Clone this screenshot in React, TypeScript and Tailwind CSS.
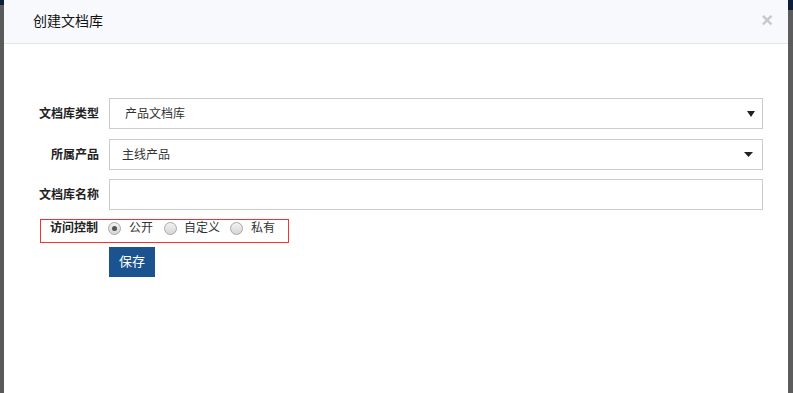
import React from "react";

function Radio({ checked }: { checked?: boolean }) {
  return (
    <span className="inline-flex h-[13px] w-[13px] items-center justify-center rounded-full border border-[#a8a8a8] bg-gradient-to-b from-[#f2f2f2] to-[#d6d6d6]">
      {checked && <span className="h-[5px] w-[5px] rounded-full bg-[#555]" />}
    </span>
  );
}

export default function App() {
  const font = { fontFamily: '"Liberation Sans", "Noto Sans CJK SC", sans-serif' };
  return (
    <div className="flex h-[393px] w-[793px] bg-[#5e5e5e]" style={font}>
      <div className="w-[4px] shrink-0 bg-[#5a5a5a]">
        <div className="h-[5px] bg-[#0b1e3a]" />
      </div>
      <div className="flex w-[784px] shrink-0 flex-col bg-white">
        <div className="flex h-[44px] shrink-0 items-center justify-between border-b border-[#e5e5e5] bg-[#f8f9fd] pl-[29px] pr-[15px]">
          <span className="text-[14px] text-[#111]">创建文档库</span>
          <span className="-mt-[4px] text-[20px] font-bold leading-none text-[#c8c8c8]">×</span>
        </div>
        <div className="flex flex-col pt-[54px]">
          <div className="flex items-center">
            <div className="w-[96px] pr-[1px] text-right text-[12px] font-bold text-[#222]">文档库类型</div>
            <div className="ml-[9px] flex h-[31px] w-[654px] items-center justify-between border border-[#ccc] pl-[15px] pr-[7px] text-[12px] text-[#333]">
              <span>产品文档库</span>
              <svg width="8" height="6" viewBox="0 0 8 6" className="block">
                <path d="M0 0 L8 0 L4 6 Z" fill="#222" />
              </svg>
            </div>
          </div>
          <div className="mt-[10px] flex items-center">
            <div className="w-[96px] pr-[1px] text-right text-[12px] font-bold text-[#222]">所属产品</div>
            <div className="ml-[9px] flex h-[31px] w-[654px] items-center justify-between border border-[#ccc] pl-[12px] pr-[9px] text-[12px] text-[#333]">
              <span>主线产品</span>
              <svg width="9" height="5" viewBox="0 0 9 5" className="block">
                <path d="M0 0 L9 0 L4.5 5 Z" fill="#222" />
              </svg>
            </div>
          </div>
          <div className="mt-[9px] flex items-center">
            <div className="w-[96px] pr-[1px] text-right text-[12px] font-bold text-[#222]">文档库名称</div>
            <div className="ml-[9px] h-[31px] w-[654px] border border-[#ccc]" />
          </div>
          <div className="mt-[9px] flex">
            <div className="ml-[36px] flex h-[24px] w-[249px] items-start border border-[#e33] text-[12px] text-[#333]">
              <div className="-mt-[1px] flex items-center">
                <span className="ml-[9px] font-bold text-[#222]">访问控制</span>
                <span className="ml-[10px] flex items-center">
                  <Radio checked />
                  <span className="ml-[8px]">公开</span>
                </span>
                <span className="ml-[11px] flex items-center">
                  <Radio />
                  <span className="ml-[7px]">自定义</span>
                </span>
                <span className="ml-[10px] flex items-center">
                  <Radio />
                  <span className="ml-[8px]">私有</span>
                </span>
              </div>
            </div>
          </div>
          <div className="ml-[105px] mt-[4px]">
            <div className="flex h-[30px] w-[46px] items-center justify-center bg-[#1b5390] text-[13px] text-white">保存</div>
          </div>
        </div>
      </div>
      <div className="w-[5px] shrink-0 bg-[#5c5c5c]">
        <div className="h-[10px] bg-[#0b1e3a]" />
      </div>
    </div>
  );
}
